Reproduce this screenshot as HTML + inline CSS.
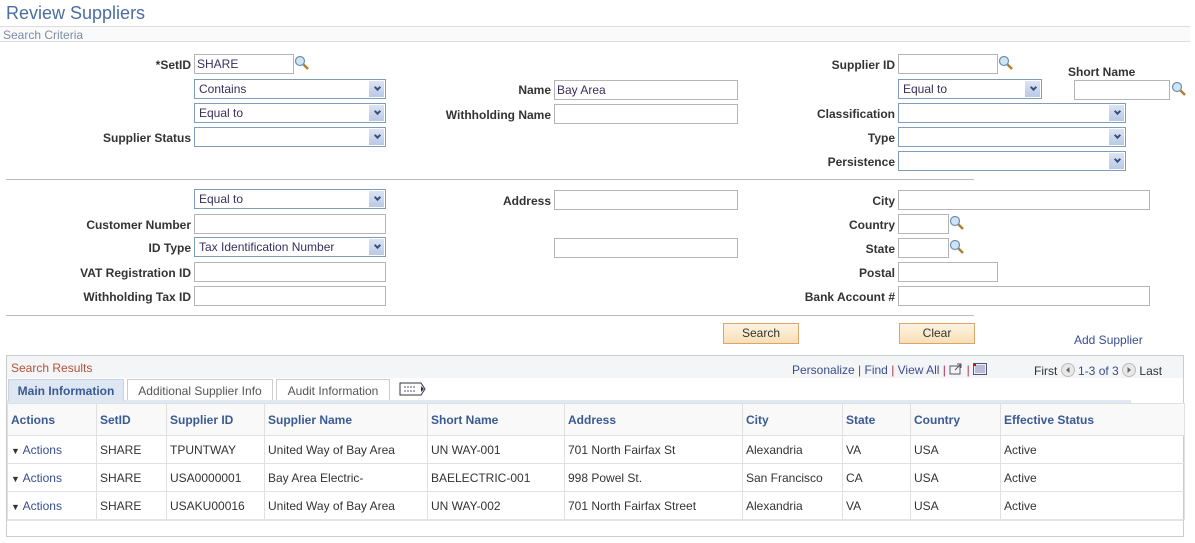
<!DOCTYPE html>
<html><head><meta charset="utf-8"><style>
*{box-sizing:border-box}
body{margin:0;width:1195px;height:543px;background:#fff;font-family:"Liberation Sans",Arial,sans-serif;font-size:12px;color:#333;position:relative;overflow:hidden}
.a{position:absolute}
.lbl{position:absolute;font-weight:bold;color:#333;text-align:right;white-space:nowrap;line-height:14px}
.in{position:absolute;height:20px;border:1px solid #b5b5b5;background:#fff;padding:2px 2px;line-height:14px;color:#3a2e5c;white-space:nowrap}
.sel{position:absolute;height:20px;border:1px solid #7f9db9;background:#fff;padding:2px 4px;line-height:14px;color:#3a2e5c}
.sel:after{content:"";position:absolute;right:1px;top:1px;width:15px;height:16px;background:linear-gradient(#dbe4f3,#b9c9e6)}
.sel i{position:absolute;right:5px;top:5px;width:5px;height:5px;border-right:2px solid #3b4f7a;border-bottom:2px solid #3b4f7a;transform:rotate(45deg);z-index:2}
.mag{position:absolute;width:16px;height:16px}
.hr{position:absolute;height:1px;background:#bbb}
.btn{position:absolute;height:21px;border:1px solid #d9a56a;background:linear-gradient(#fdf3e1,#f8dfb4);text-align:center;line-height:19px;color:#333;font-size:12px}
.lnk{color:#3a4d8f}
table{border-collapse:collapse;table-layout:fixed}
td{border:1px solid #e0e0e0;padding:0 3px;white-space:nowrap;overflow:hidden}
th{border:1px solid #e0e0e0;padding:0 3px;text-align:left;color:#3a5a93;font-weight:bold;background:#f9f9f9}
</style></head><body>
<div class="a" style="left:6px;top:3px;font-size:18px;color:#4a6ea0">Review Suppliers</div>
<div class="a" style="left:0;top:26px;width:1190px;height:16px;background:#fafafa;border-top:1px solid #ddd;border-bottom:1px solid #ddd"></div>
<div class="a" style="left:3px;top:28px;color:#7d8aa8;font-size:12px">Search Criteria</div>

<svg width="0" height="0" style="position:absolute"><defs><g id="m"><circle cx="6" cy="6" r="4.5" fill="#cfe3f5" stroke="#6d8fb5" stroke-width="1.2"/><line x1="9.5" y1="9.5" x2="14" y2="14" stroke="#b08030" stroke-width="2.5"/></g></defs></svg>

<div class="lbl" style="right:1004px;top:58px">*SetID</div>
<div class="in" style="left:194px;top:54px;width:100px">SHARE</div>
<svg class="mag" style="left:294px;top:55px"><use href="#m"/></svg>
<div class="sel" style="left:194px;top:79px;width:192px">Contains<i></i></div>
<div class="sel" style="left:194px;top:103px;width:192px">Equal to<i></i></div>
<div class="lbl" style="right:1004px;top:131px">Supplier Status</div>
<div class="sel" style="left:194px;top:127px;width:192px"><i></i></div>

<div class="lbl" style="right:644px;top:83px">Name</div>
<div class="in" style="left:554px;top:80px;width:184px">Bay Area</div>
<div class="lbl" style="right:644px;top:108px">Withholding Name</div>
<div class="in" style="left:554px;top:104px;width:184px"></div>

<div class="lbl" style="right:300px;top:58px">Supplier ID</div>
<div class="in" style="left:898px;top:54px;width:100px"></div>
<svg class="mag" style="left:998px;top:55px"><use href="#m"/></svg>
<div class="lbl" style="left:1068px;top:65px">Short Name</div>
<div class="in" style="left:1074px;top:80px;width:96px"></div>
<svg class="mag" style="left:1171px;top:81px"><use href="#m"/></svg>
<div class="sel" style="left:898px;top:79px;width:144px">Equal to<i></i></div>
<div class="lbl" style="right:300px;top:107px">Classification</div>
<div class="sel" style="left:898px;top:103px;width:228px"><i></i></div>
<div class="lbl" style="right:300px;top:131px">Type</div>
<div class="sel" style="left:898px;top:127px;width:228px"><i></i></div>
<div class="lbl" style="right:300px;top:155px">Persistence</div>
<div class="sel" style="left:898px;top:151px;width:228px"><i></i></div>

<div class="hr" style="left:6px;top:179px;width:968px"></div>

<div class="sel" style="left:194px;top:189px;width:192px">Equal to<i></i></div>
<div class="lbl" style="right:1004px;top:218px">Customer Number</div>
<div class="in" style="left:194px;top:214px;width:192px"></div>
<div class="lbl" style="right:1004px;top:241px">ID Type</div>
<div class="sel" style="left:194px;top:237px;width:192px">Tax Identification Number<i></i></div>
<div class="lbl" style="right:1004px;top:266px">VAT Registration ID</div>
<div class="in" style="left:194px;top:262px;width:192px"></div>
<div class="lbl" style="right:1004px;top:290px">Withholding Tax ID</div>
<div class="in" style="left:194px;top:286px;width:192px"></div>

<div class="lbl" style="right:644px;top:194px">Address</div>
<div class="in" style="left:554px;top:190px;width:184px"></div>
<div class="in" style="left:554px;top:238px;width:184px"></div>

<div class="lbl" style="right:300px;top:194px">City</div>
<div class="in" style="left:898px;top:190px;width:252px"></div>
<div class="lbl" style="right:300px;top:218px">Country</div>
<div class="in" style="left:898px;top:214px;width:51px"></div>
<svg class="mag" style="left:949px;top:215px"><use href="#m"/></svg>
<div class="lbl" style="right:300px;top:242px">State</div>
<div class="in" style="left:898px;top:238px;width:51px"></div>
<svg class="mag" style="left:949px;top:239px"><use href="#m"/></svg>
<div class="lbl" style="right:300px;top:266px">Postal</div>
<div class="in" style="left:898px;top:262px;width:100px"></div>
<div class="lbl" style="right:300px;top:290px">Bank Account #</div>
<div class="in" style="left:898px;top:286px;width:252px"></div>

<div class="hr" style="left:6px;top:315px;width:968px"></div>
<div class="btn" style="left:723px;top:323px;width:76px">Search</div>
<div class="btn" style="left:899px;top:323px;width:76px">Clear</div>
<div class="a lnk" style="left:1074px;top:333px">Add Supplier</div>

<div class="a" style="left:6px;top:355px;width:1178px;height:182px;border:1px solid #ccc"></div>
<div class="a" style="left:7px;top:356px;width:1176px;height:22px;background:#f3f5f6"></div>
<div class="a" style="left:11px;top:361px;color:#b5513a">Search Results</div>
<div class="a" style="left:792px;top:363px;color:#3a4d8f;white-space:nowrap">Personalize <span style="color:#b03050">|</span> Find <span style="color:#b03050">|</span> View All <span style="color:#b03050">|</span> <svg width="14" height="12" style="vertical-align:-1px"><rect x="1" y="3" width="10" height="8" fill="none" stroke="#556"/><path d="M6 7L12 1M8 1h4v4" stroke="#556" fill="none"/></svg> <span style="color:#b03050">|</span> <svg width="14" height="12" style="vertical-align:-1px"><rect x="0.5" y="0.5" width="13" height="11" fill="#eef" stroke="#557"/><path d="M2 3h10M2 5h10M2 7h10M2 9h10" stroke="#88a"/><rect x="1" y="1" width="2" height="2" fill="#d00"/></svg></div>
<div class="a" style="left:1034px;top:363px;color:#333;white-space:nowrap">First <svg width="14" height="14" style="vertical-align:-2px"><circle cx="7" cy="7" r="6.5" fill="#e8e8e8" stroke="#bbb"/><path d="M8.5 4L5 7l3.5 3z" fill="#666"/></svg> <span class="lnk">1-3 of 3</span> <svg width="14" height="14" style="vertical-align:-2px"><circle cx="7" cy="7" r="6.5" fill="#e8e8e8" stroke="#bbb"/><path d="M5.5 4L9 7l-3.5 3z" fill="#666"/></svg> Last</div>

<div class="a" style="left:7px;top:400px;width:1124px;height:3px;background:#e2e8f2"></div>
<div class="a" style="left:8px;top:379px;width:116px;height:22px;background:#dde6f1;border:1px solid #c8d2e0;border-bottom:none;text-align:center;line-height:22px;font-weight:bold;color:#3a5a93">Main Information</div>
<div class="a" style="left:127px;top:379px;width:146px;height:21px;border:1px solid #ccc;border-bottom:none;text-align:center;line-height:22px;color:#555">Additional Supplier Info</div>
<div class="a" style="left:276px;top:379px;width:114px;height:21px;border:1px solid #ccc;border-bottom:none;text-align:center;line-height:22px;color:#555">Audit Information</div>
<svg class="a" style="left:399px;top:382px" width="28" height="14"><path d="M1 1h21l4 6-4 6H1z" fill="#fff" stroke="#334"/><path d="M5 5h12M5 9h12" stroke="#557" stroke-dasharray="2 1"/><path d="M22 4l3 3-3 3z" fill="#334"/></svg>

<table class="a" style="left:7px;top:403px;width:1177px">
<colgroup><col style="width:89px"><col style="width:70px"><col style="width:98px"><col style="width:163px"><col style="width:137px"><col style="width:178px"><col style="width:100px"><col style="width:68px"><col style="width:90px"><col style="width:184px"></colgroup>
<tr style="height:32px"><th>Actions</th><th>SetID</th><th>Supplier ID</th><th>Supplier Name</th><th>Short Name</th><th>Address</th><th>City</th><th>State</th><th>Country</th><th>Effective Status</th></tr>
<tr style="height:28px"><td><span style="font-size:9px">&#9660;</span> <span class="lnk">Actions</span></td><td>SHARE</td><td>TPUNTWAY</td><td>United Way of Bay Area</td><td>UN WAY-001</td><td>701 North Fairfax St</td><td>Alexandria</td><td>VA</td><td>USA</td><td>Active</td></tr>
<tr style="height:28px"><td><span style="font-size:9px">&#9660;</span> <span class="lnk">Actions</span></td><td>SHARE</td><td>USA0000001</td><td>Bay Area Electric-</td><td>BAELECTRIC-001</td><td>998 Powel St.</td><td>San Francisco</td><td>CA</td><td>USA</td><td>Active</td></tr>
<tr style="height:28px"><td><span style="font-size:9px">&#9660;</span> <span class="lnk">Actions</span></td><td>SHARE</td><td>USAKU00016</td><td>United Way of Bay Area</td><td>UN WAY-002</td><td>701 North Fairfax Street</td><td>Alexandria</td><td>VA</td><td>USA</td><td>Active</td></tr>
</table>
<div class="a" style="left:7px;top:519px;width:1176px;height:2px;background:#e4e4e4"></div>
</body></html>
